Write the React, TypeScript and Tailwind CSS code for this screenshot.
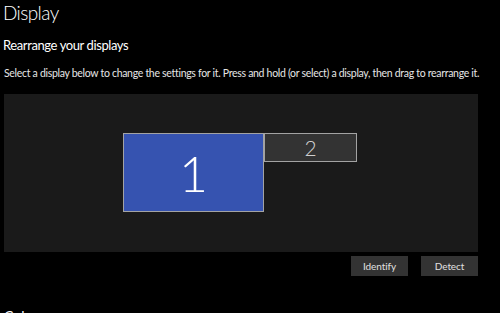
import React from "react";

const font = { fontFamily: 'Lato, "Open Sans", sans-serif' };

// Monitor tile on the arrangement canvas
function Monitor({
  label,
  className,
  labelClass,
}: {
  label: string;
  className: string;
  labelClass: string;
}) {
  return (
    <div className={`absolute flex items-center justify-center border border-[#a3a3a3] ${className}`}>
      <span className={`font-light leading-none ${labelClass}`}>{label}</span>
    </div>
  );
}

export default function App() {
  return (
    <div
      className="w-[500px] h-[313px] overflow-hidden bg-black text-white"
      style={font}
    >
      <div className="pl-[3px]">
        <h1 className="text-[19px] font-light leading-[26px] tracking-[-0.6px]">Display</h1>
        <h2 className="mt-[9px] text-[13px] leading-[20px] font-normal tracking-[-0.4px]">Rearrange your displays</h2>
        <p className="mt-[11px] text-[10.5px] leading-[14px] text-[#e6e6e6] whitespace-nowrap pl-[1px] tracking-[-0.3px]">
          Select a display below to change the settings for it. Press and hold (or select) a display, then drag to rearrange it.
        </p>
      </div>

      {/* Arrangement canvas */}
      <div className="relative ml-[4px] mt-[14px] w-[474px] h-[158px] bg-[#1a1a1a]">
        <Monitor
          label="1"
          className="left-[119px] top-[39px] w-[141px] h-[79px] bg-[#3653b0]"
          labelClass="text-[50px] text-white"
        />
        <Monitor
          label="2"
          className="left-[260px] top-[39px] w-[93px] h-[29px] bg-[#333333]"
          labelClass="text-[21px] text-[#cfcfcf]"
        />
      </div>

      <div className="flex justify-end gap-[13px] w-[478px] mt-[4px]">
        <button className="w-[57px] h-[20px] bg-[#333333] text-[10px] tracking-[-0.1px] text-[#e0e0e0]">Identify</button>
        <button className="w-[57px] h-[20px] bg-[#333333] text-[10px] tracking-[-0.1px] text-[#e0e0e0]">Detect</button>
      </div>

      <h2 className="mt-[30px] pl-[4px] text-[14px] leading-[20px]">Color</h2>
    </div>
  );
}
